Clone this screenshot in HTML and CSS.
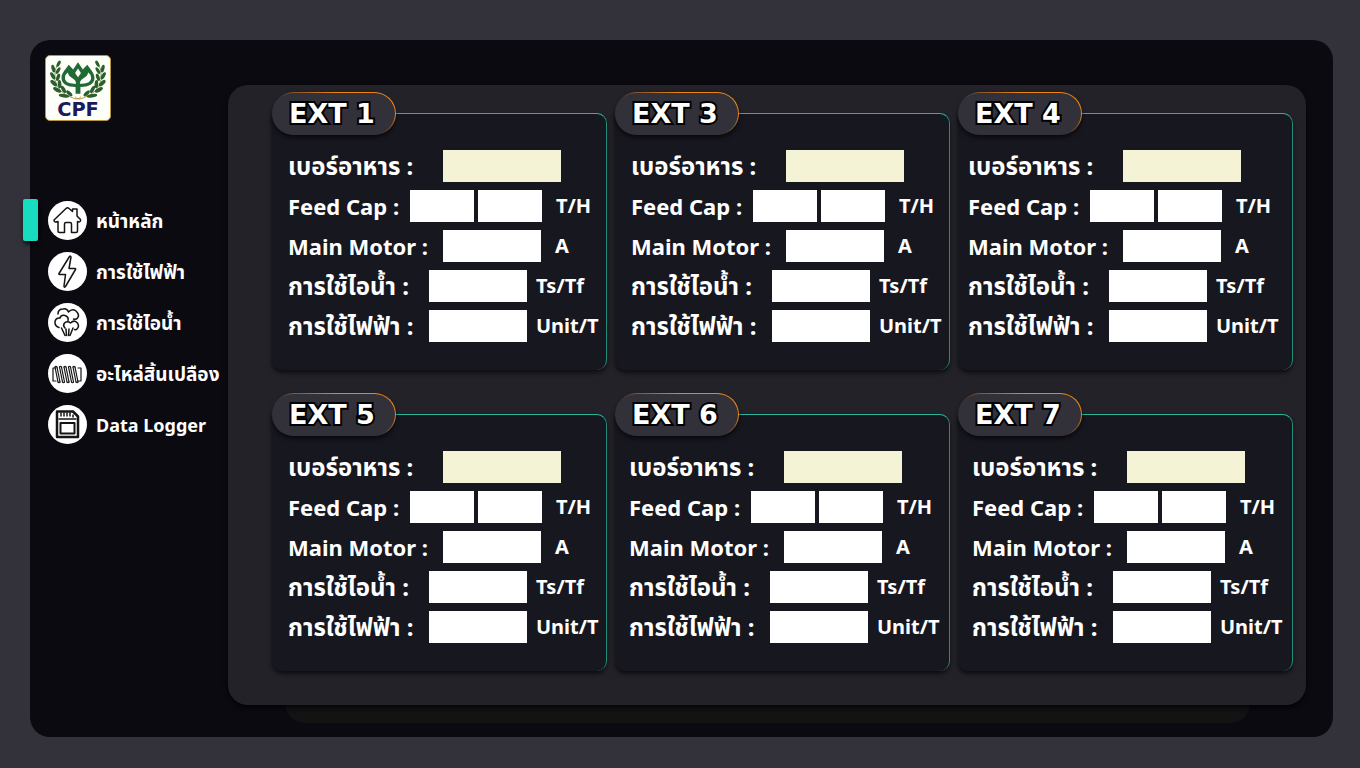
FILE: index.html
```
<!DOCTYPE html>
<html lang="th">
<head>
    <meta charset="UTF-8">
    <meta name="viewport" content="width=device-width, initial-scale=1.0">
    <title>CPF Extruder Dashboard</title>
    <link rel="stylesheet" href="styles.css">
</head>
<body>
    <div class="frame">
        <aside class="sidebar">
            <a class="logo" href="#" aria-label="CPF">
                <svg viewBox="0 0 66 66">
                    <defs>
                        <g id="laurel" fill="#2c5f2d">
                            <path d="M27 43 Q12 38 9 24 Q8 14 13 6" fill="none" stroke="#6f7f35" stroke-width="0.8"/>
                            <ellipse cx="13" cy="8" rx="1.6" ry="3.6" transform="rotate(28 13 8)"/>
                            <ellipse cx="7.500" cy="13" rx="1.800" ry="4" transform="rotate(-14 7.500 13)"/>
                            <ellipse cx="12.500" cy="15" rx="1.700" ry="3.800" transform="rotate(30 12.500 15)"/>
                            <ellipse cx="7" cy="20.500" rx="1.900" ry="4.200" transform="rotate(-30 7 20.500)"/>
                            <ellipse cx="12.500" cy="22" rx="1.800" ry="4" transform="rotate(18 12.500 22)"/>
                            <ellipse cx="8" cy="28" rx="2" ry="4.400" transform="rotate(-45 8 28)"/>
                            <ellipse cx="14" cy="29" rx="1.900" ry="4.200" transform="rotate(-4 14 29)"/>
                            <ellipse cx="11.500" cy="35" rx="2" ry="4.600" transform="rotate(-62 11.500 35)"/>
                            <ellipse cx="18" cy="34.500" rx="1.900" ry="4.200" transform="rotate(-28 18 34.500)"/>
                            <ellipse cx="18.500" cy="41" rx="1.800" ry="5.400" transform="rotate(-82 18.500 41)"/>
                            <ellipse cx="24" cy="38.500" rx="1.800" ry="4" transform="rotate(-48 24 38.500)"/>
                        </g>
                    </defs>
                    <use href="#laurel"/>
                    <use href="#laurel" transform="translate(66 0) scale(-1 1)"/>
                    <path d="M27 43 Q33 46 36 42 M39 43 Q33 46 30 42" fill="none" stroke="#b8963c"/>
                    <path fill="#1f6a35" d="M33 6.500 L38 14 L42.500 9 C47 15 50 18 50 23 C50 29 44 32 35.500 32 V39 H30.500 V32 C22 32 16 29 16 23 C16 18 19 15 23.500 9 L28 14 Z"/>
                    <g fill="#fffffa">
                        <path d="M33 13 L36 17.500 L33 22 L30 17.500 Z"/>
                        <path d="M22.500 17 C24 24 31 22 31 28.500 C24 29 19.500 27 19.500 22.500 C19.500 20 21 18 22.500 17 Z"/>
                        <path d="M43.500 17 C42 24 35 22 35 28.500 C42 29 46.500 27 46.500 22.500 C46.500 20 45 18 43.500 17 Z"/>
                    </g>
                    <text x="33" y="62" text-anchor="middle" class="logo-text">CPF</text>
                </svg>
            </a>
            <nav class="menu">
                <a class="menu-item active" href="#">
                    <span class="menu-icon">
                        <svg viewBox="0 0 39 39">
                            <path d="M6 19 L18 7.500 Q19.500 6 21 7.500 L24.500 10.500 V8 H29 V15 L32.500 18.500 Q33 21 30.500 21 L29.500 20.500 V30 Q29.500 31.500 28 31.500 H23.500 V23 Q23.500 21.500 22 21.500 H18 Q16.500 21.500 16.500 23 V31.500 H11.500 Q10 31.500 10 30 V20.500 Q6 22 6 19 Z"/>
                        </svg>
                    </span>
                    หน้าหลัก
                </a>
                <a class="menu-item" href="#">
                    <span class="menu-icon">
                        <svg viewBox="0 0 39 39">
                            <path d="M21.500 4.500 L11 21.500 Q10.500 22.500 11.500 22.500 H17.500 L16 34 Q16 36 17.500 34.500 L27.500 17.500 Q28 16.500 27 16.500 H21 L23 5 Q22.500 3.500 21.500 4.500 Z"/>
                        </svg>
                    </span>
                    การใช้ไฟฟ้า
                </a>
                <a class="menu-item" href="#">
                    <span class="menu-icon">
                        <svg viewBox="0 0 39 39">
                            <path d="M10 11 Q10 6 15 6 Q19 5 20.500 9 Q24 5 28 8 Q32 12 29.500 15 Q28 17 25.500 16"/>
                            <path d="M11 24.500 Q6.500 23 7 18.500 Q8 14.500 12 15 Q13 11.500 17 12.500 Q21 14 20 17.500"/>
                            <path d="M17 25 Q14.500 22.500 16.500 20 Q19.500 17.500 22.500 20 Q26 16.500 29 19.500 Q32 23 29 26 Q28 27 26.500 26.500"/>
                            <path d="M13.500 25 L17 32.500 M18 26 L18.500 32.500 M21 26 L20.500 32.500 M25 25 L22 32.500"/>
                        </svg>
                    </span>
                    การใช้ไอน้ำ
                </a>
                <a class="menu-item" href="#">
                    <span class="menu-icon">
                        <svg viewBox="0 0 39 39">
                            <g stroke-width="1.200">
                                <path d="M8 14 H5 V27 H8 M30 14 H33 V27 H30"/>
                                <path d="M7 13 L10 28 M9 13 L12 28 M11.500 13 L14.500 28 M13.500 13 L16.500 28 M16 13 L19 28 M18 13 L21 28 M20.500 13 L23.500 28 M22.500 13 L25.500 28 M25 13 L28 28 M27 13 L30 28"/>
                                <path d="M7 13 Q8 11.500 9 13 M11.500 13 Q12.500 11.500 13.500 13 M16 13 Q17 11.500 18 13 M20.500 13 Q21.500 11.500 22.500 13 M25 13 Q26 11.500 27 13 M10 28 Q11 29.500 12 28 M14.500 28 Q15.500 29.500 16.500 28 M19 28 Q20 29.500 21 28 M23.500 28 Q24.500 29.500 25.500 28 M28 28 Q29 29.500 30 28"/>
                            </g>
                        </svg>
                    </span>
                    อะไหล่สิ้นเปลือง
                </a>
                <a class="menu-item" href="#" lang="en">
                    <span class="menu-icon">
                        <svg viewBox="0 0 39 39">
                            <path d="M9 6.500 H25 L30 11.500 V32 H9 Z" stroke-width="2.500"/>
                            <path d="M12.500 18 H26.500 V28.500 H12.500 Z" stroke-width="2"/>
                            <path d="M13 8 V11 M16 8 V11 M19 8 V11 M22 8 V11 M25 10 V12 M11 14 H28" stroke-width="1.500"/>
                        </svg>
                    </span>
                    Data Logger
                </a>
            </nav>
        </aside>

        <main class="panel">
            <section class="card">
                <h2 class="badge">EXT 1</h2>
                <div class="row"><label class="wide" for="feed1">เบอร์อาหาร :</label><input class="feed" id="feed1"></div>
                <div class="row"><label class="cap" for="cap1" lang="en">Feed Cap :</label><input class="half" id="cap1"><input class="half" aria-label="Feed Cap 2"><span class="unit far">T/H</span></div>
                <div class="row"><label class="wide" for="motor1" lang="en">Main Motor :</label><input id="motor1"><span class="unit far">A</span></div>
                <div class="row"><label for="steam1">การใช้ไอน้ำ :</label><input id="steam1"><span class="unit">Ts/Tf</span></div>
                <div class="row"><label for="power1">การใช้ไฟฟ้า :</label><input id="power1"><span class="unit">Unit/T</span></div>
            </section>

            <section class="card">
                <h2 class="badge">EXT 3</h2>
                <div class="row"><label class="wide" for="feed3">เบอร์อาหาร :</label><input class="feed" id="feed3"></div>
                <div class="row"><label class="cap" for="cap3" lang="en">Feed Cap :</label><input class="half" id="cap3"><input class="half" aria-label="Feed Cap 2"><span class="unit far">T/H</span></div>
                <div class="row"><label class="wide" for="motor3" lang="en">Main Motor :</label><input id="motor3"><span class="unit far">A</span></div>
                <div class="row"><label for="steam3">การใช้ไอน้ำ :</label><input id="steam3"><span class="unit">Ts/Tf</span></div>
                <div class="row"><label for="power3">การใช้ไฟฟ้า :</label><input id="power3"><span class="unit">Unit/T</span></div>
            </section>

            <section class="card narrow">
                <h2 class="badge">EXT 4</h2>
                <div class="row"><label class="wide" for="feed4">เบอร์อาหาร :</label><input class="feed" id="feed4"></div>
                <div class="row"><label class="cap" for="cap4" lang="en">Feed Cap :</label><input class="half" id="cap4"><input class="half" aria-label="Feed Cap 2"><span class="unit far">T/H</span></div>
                <div class="row"><label class="wide" for="motor4" lang="en">Main Motor :</label><input id="motor4"><span class="unit far">A</span></div>
                <div class="row"><label for="steam4">การใช้ไอน้ำ :</label><input id="steam4"><span class="unit">Ts/Tf</span></div>
                <div class="row"><label for="power4">การใช้ไฟฟ้า :</label><input id="power4"><span class="unit">Unit/T</span></div>
            </section>

            <section class="card">
                <h2 class="badge">EXT 5</h2>
                <div class="row"><label class="wide" for="feed5">เบอร์อาหาร :</label><input class="feed" id="feed5"></div>
                <div class="row"><label class="cap" for="cap5" lang="en">Feed Cap :</label><input class="half" id="cap5"><input class="half" aria-label="Feed Cap 2"><span class="unit far">T/H</span></div>
                <div class="row"><label class="wide" for="motor5" lang="en">Main Motor :</label><input id="motor5"><span class="unit far">A</span></div>
                <div class="row"><label for="steam5">การใช้ไอน้ำ :</label><input id="steam5"><span class="unit">Ts/Tf</span></div>
                <div class="row"><label for="power5">การใช้ไฟฟ้า :</label><input id="power5"><span class="unit">Unit/T</span></div>
            </section>

            <section class="card medium">
                <h2 class="badge">EXT 6</h2>
                <div class="row"><label class="wide" for="feed6">เบอร์อาหาร :</label><input class="feed" id="feed6"></div>
                <div class="row"><label class="cap" for="cap6" lang="en">Feed Cap :</label><input class="half" id="cap6"><input class="half" aria-label="Feed Cap 2"><span class="unit far">T/H</span></div>
                <div class="row"><label class="wide" for="motor6" lang="en">Main Motor :</label><input id="motor6"><span class="unit far">A</span></div>
                <div class="row"><label for="steam6">การใช้ไอน้ำ :</label><input id="steam6"><span class="unit">Ts/Tf</span></div>
                <div class="row"><label for="power6">การใช้ไฟฟ้า :</label><input id="power6"><span class="unit">Unit/T</span></div>
            </section>

            <section class="card medium">
                <h2 class="badge">EXT 7</h2>
                <div class="row"><label class="wide" for="feed7">เบอร์อาหาร :</label><input class="feed" id="feed7"></div>
                <div class="row"><label class="cap" for="cap7" lang="en">Feed Cap :</label><input class="half" id="cap7"><input class="half" aria-label="Feed Cap 2"><span class="unit far">T/H</span></div>
                <div class="row"><label class="wide" for="motor7" lang="en">Main Motor :</label><input id="motor7"><span class="unit far">A</span></div>
                <div class="row"><label for="steam7">การใช้ไอน้ำ :</label><input id="steam7"><span class="unit">Ts/Tf</span></div>
                <div class="row"><label for="power7">การใช้ไฟฟ้า :</label><input id="power7"><span class="unit">Unit/T</span></div>
            </section>
        </main>
    </div>
</body>
</html>
```

FILE: styles.css
```
* {
    box-sizing: border-box;
}

body {
    margin: 0;
    padding: 40px 27px 31px 30px;
    font-family: "Noto Sans", "Noto Sans Thai", sans-serif;
    font-weight: 700;
    color: #ffffff;
    background-color: #33323b;
}

.frame {
    position: relative;
    z-index: 0;
    display: flex;
    padding: 45px 27px 32px 0;
    background-color: #0b0a10;
    border-radius: 20px;
}

/* darker sheet behind the panel */
.frame::after {
    content: "";
    position: absolute;
    z-index: -1;
    left: 255px;
    right: 83px;
    bottom: 14px;
    height: 50px;
    background-color: #131313;
    border-radius: 20px;
}

/* Side menu */
.sidebar {
    flex: 0 0 198px;
    margin-top: -30px;
}

.logo {
    display: block;
    width: 66px;
    height: 66px;
    margin-left: 15px;
    background-color: #fffffa;
    border: 1px solid #b8963c;
    border-radius: 5px;
}

.logo svg {
    display: block;
}

.logo-text {
    font-family: "DejaVu Sans", sans-serif;
    font-size: 20px;
    font-weight: 700;
    fill: #1c1a5e;
}

.menu {
    display: flex;
    flex-direction: column;
    gap: 12px;
    margin-top: 80px;
}

.menu-item {
    position: relative;
    display: flex;
    align-items: center;
    gap: 9px;
    height: 39px;
    padding-left: 18px;
    color: #ffffff;
    font-size: 19px;
    line-height: 24px;
    text-decoration: none;
    white-space: nowrap;
}

.menu-item:lang(en) {
    font-size: 18px;
}

.menu-item.active::before {
    content: "";
    position: absolute;
    left: -7px;
    top: -2px;
    width: 15px;
    height: 42px;
    background-color: #18dcc0;
    border-radius: 2px;
    box-shadow: 1px 3px 4px rgba(0, 0, 0, 0.8);
}

.menu-icon {
    flex: none;
    width: 39px;
    height: 39px;
    background-color: #ffffff;
    border-radius: 50%;
}

.menu-icon svg {
    display: block;
    fill: none;
    stroke: #151515;
    stroke-width: 1.5;
    stroke-linejoin: round;
    stroke-linecap: round;
}

/* Panel with the extruder cards */
.panel {
    flex: 1;
    display: grid;
    grid-template-columns: repeat(3, 1fr);
    gap: 44px 8px;
    padding: 28px 13px 34px 44px;
    background-color: #232228;
    border-radius: 20px;
    box-shadow: 0 3px 5px rgba(0, 0, 0, 0.7);
}

.card {
    position: relative;
    display: flex;
    flex-direction: column;
    gap: 8px;
    padding: 36px 0 28px 16px;
    background-color: #171720;
    border-top: 1px solid #2bb39b;
    border-right: 1px solid #238c7b;
    border-radius: 0 10px 10px 10px;
    box-shadow: 0 3px 4px rgba(0, 0, 0, 0.6);
}

.card.medium {
    padding-left: 14px;
}

.card.narrow {
    padding-left: 10px;
}

.badge {
    position: absolute;
    left: 0;
    top: -22px;
    width: 124px;
    height: 43px;
    margin: 0;
    padding-left: 16px;
    font-family: "DejaVu Sans", sans-serif;
    font-size: 27px;
    font-weight: 700;
    line-height: 42px;
    white-space: nowrap;
    -webkit-text-stroke: 4px #000000;
    paint-order: stroke fill;
    border: 1px solid transparent;
    border-radius: 22px;
    background: linear-gradient(#32313a, #32313a) padding-box,
                linear-gradient(to top right, #32313a 45%, #ee8414 75%) border-box;
    box-shadow: 0 3px 4px rgba(0, 0, 0, 0.6);
}

.row {
    display: flex;
    align-items: center;
    height: 32px;
    white-space: nowrap;
}

.row label {
    flex: none;
    width: 141px;
    font-size: 24px;
    line-height: 32px;
}

.row label:lang(en) {
    font-size: 22px;
}

.row label.wide {
    width: 155px;
}

.row label.cap {
    width: 122px;
}

.row input {
    flex: none;
    width: 98px;
    height: 32px;
    padding: 0 8px;
    border: none;
    border-radius: 0;
    background-color: #ffffff;
    font: inherit;
}

.row input.feed {
    width: 118px;
    background-color: #f4f3d5;
}

.row input.half {
    width: 64px;
}

.row input.half + .half {
    margin-left: 4px;
}

.unit {
    margin-left: 9px;
    font-size: 20px;
    line-height: 32px;
}

.unit.far {
    margin-left: 14px;
}
```
